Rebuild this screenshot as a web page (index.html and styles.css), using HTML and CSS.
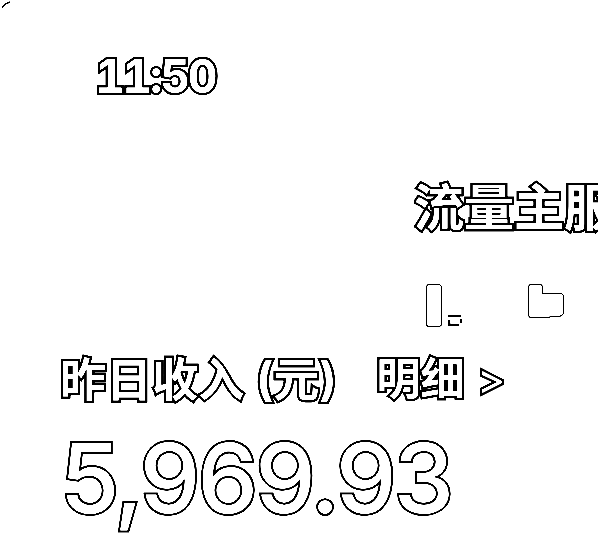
FILE: index.html
```html
<!DOCTYPE html>
<html lang="zh-CN">
<head>
  <meta charset="UTF-8">
  <title>流量主服务</title>
  <link rel="stylesheet" href="styles.css">
</head>
<body>
  <svg class="corner" width="12" height="10" viewBox="0 0 12 10"><path d="M1 8 L4 4 L9 2" fill="none" stroke="#000" stroke-width="1.5"/></svg>
  <header class="status">
    <span class="time">11:50</span>
  </header>
  <h1 class="title">流量主服</h1>
  <div class="bars">
    <svg class="bar-one" width="42" height="46" viewBox="0 0 42 46">
      <path d="M4 3 H13 Q16 3 16 6 V42 Q16 44 13 44 H4 Q2 44 2 42 V6 Q2 3 4 3 Z" fill="#fff" stroke="#000" stroke-width="2"/>
      <path d="M23 34 H36 M23 43 H34 M24 38 V42 M36 37 V41" fill="none" stroke="#000" stroke-width="2.5"/>
    </svg>
    <svg class="bar-two" width="42" height="46" viewBox="0 0 42 46">
      <path d="M4 3 H13 Q15 3 15 6 V12 H33 Q36 12 36 15 V30 Q36 34 30 34 H24 Q20 36 14 35 H4 Q2 35 2 32 V6 Q2 3 4 3 Z" fill="#fff" stroke="#000" stroke-width="2"/>
    </svg>
  </div>
  <div class="income">
    <span class="label">昨日收入 (元)</span>
    <span class="detail">明细</span>
    <span class="arrow">&gt;</span>
  </div>
  <div class="amount">5,969.93</div>
</body>
</html>
```

FILE: styles.css
```css
html, body {
  margin: 0;
  padding: 0;
  height: 549px;
  overflow: hidden;
  background-color: #ffffff;
}
body {
  width: 598px;
  position: relative;
  font-family: Inter, "Noto Sans CJK SC", sans-serif;
  color: #ffffff;
  paint-order: stroke fill;
  -webkit-text-stroke: 4.5px #000000;
  filter: grayscale(1) contrast(4);
}
.corner {
  position: absolute;
  left: 1px;
  top: 0;
}
.status {
  padding: 50px 0 0 95px;
  height: 52px;
}
.time {
  font-size: 46px;
  font-weight: bold;
  line-height: 52px;
  font-variant-numeric: tabular-nums;
  letter-spacing: -2.2px;
}
.title {
  margin: 76px 0 0 414px;
  width: 184px;
  overflow: hidden;
  white-space: nowrap;
  font-size: 50px;
  line-height: 60px;
  font-weight: bold;
}
.bars {
  display: flex;
  gap: 60px;
  margin: 44px 0 0 425px;
  height: 46px;
}
.income {
  display: flex;
  align-items: center;
  margin: 21px 0 0 60px;
  height: 54px;
  white-space: nowrap;
}
.label {
  font-size: 46px;
  font-weight: bold;
  word-spacing: 1px;
}
.detail {
  font-size: 44px;
  font-weight: bold;
  margin-left: 40px;
}
.arrow {
  font-size: 42px;
  margin: 4px 0 0 13px;
}
.amount {
  margin: 20px 0 0 60px;
  font-size: 96px;
  line-height: 110px;
  font-weight: 500;
  letter-spacing: -2.7px;
  white-space: nowrap;
  -webkit-text-stroke-width: 4px;
}
```
